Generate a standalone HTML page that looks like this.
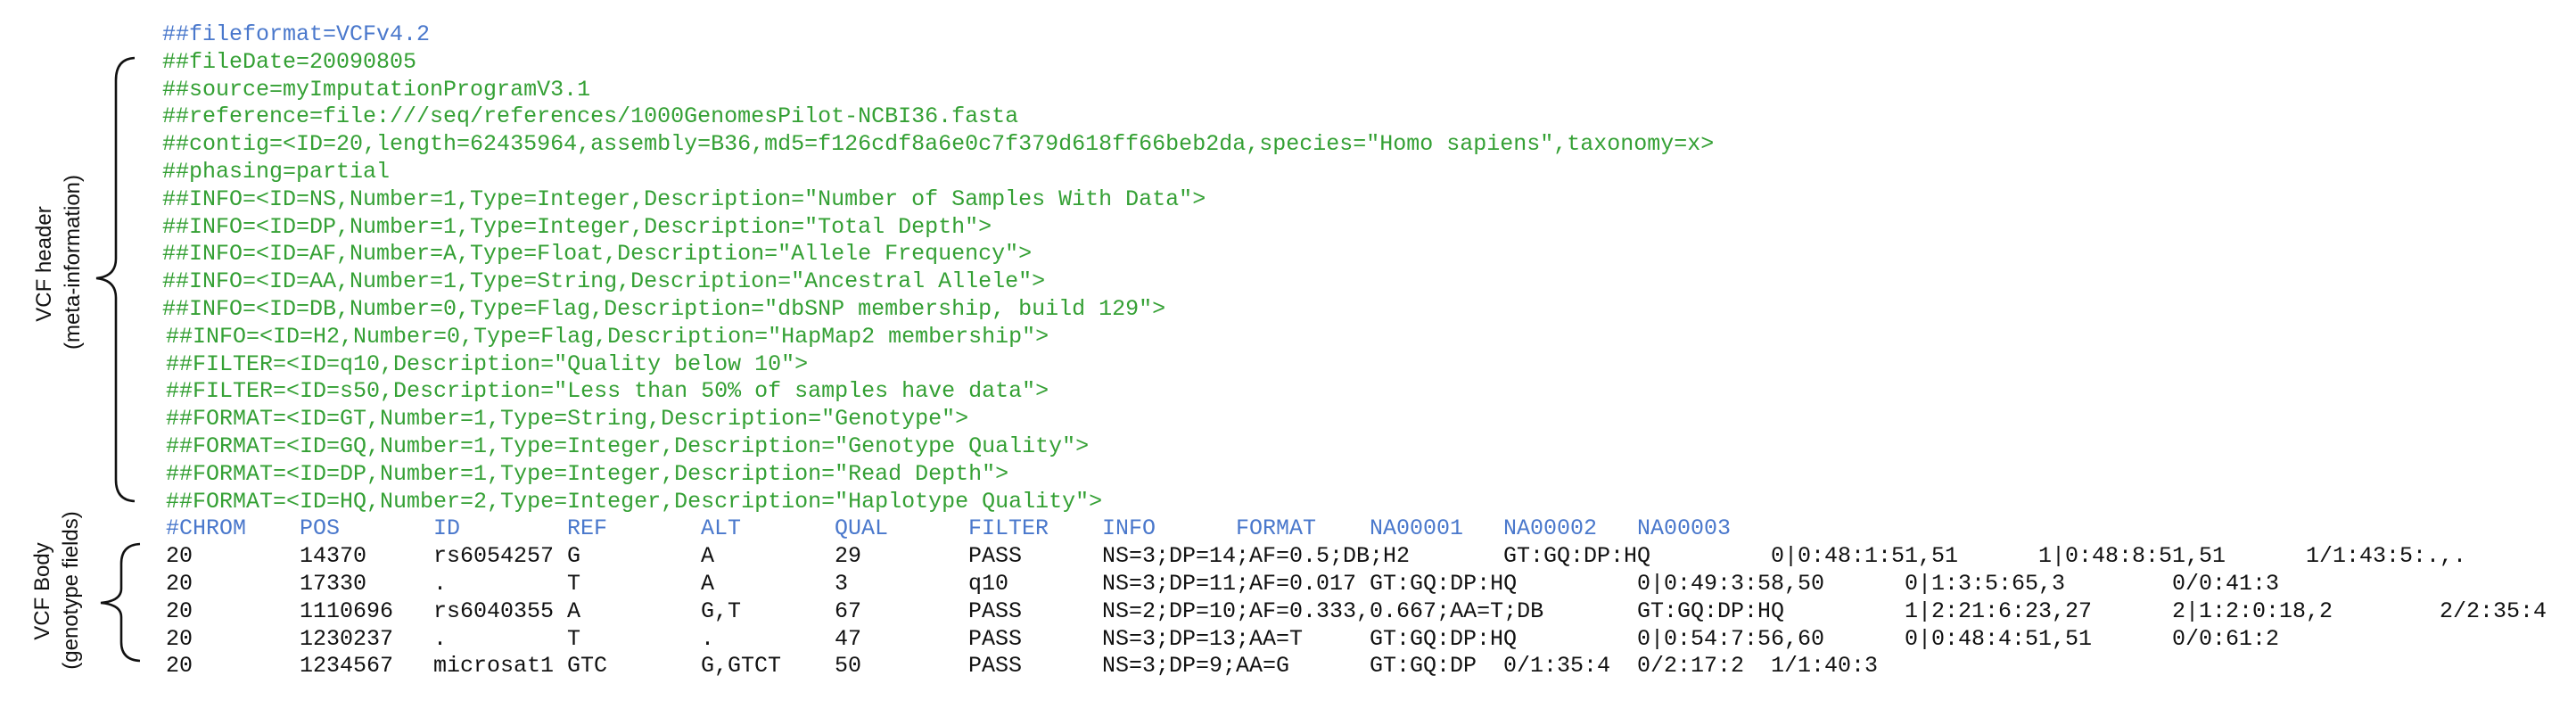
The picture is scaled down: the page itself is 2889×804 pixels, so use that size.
<!DOCTYPE html>
<html><head><meta charset="utf-8"><style>
html,body{margin:0;padding:0;background:#fff;}
body{width:2889px;height:804px;position:relative;overflow:hidden;}
.l{position:absolute;font-family:"Liberation Mono",monospace;font-size:25px;line-height:31px;white-space:pre;height:31px;}
.g{color:#34a034;}
.b{color:#4a78cc;}
.k{color:#111;}
.t{position:absolute;font-family:"Liberation Sans",sans-serif;font-size:24px;line-height:30px;color:#111;white-space:nowrap;text-align:center;transform:translate(-50%,-50%) rotate(-90deg);}
</style></head><body>
<div class="l b" style="left:182px;top:23px">##fileformat=VCFv4.2</div>
<div class="l g" style="left:182px;top:54px">##fileDate=20090805</div>
<div class="l g" style="left:182px;top:85px">##source=myImputationProgramV3.1</div>
<div class="l g" style="left:182px;top:115px">##reference=file:///seq/references/1000GenomesPilot-NCBI36.fasta</div>
<div class="l g" style="left:182px;top:146px">##contig=&lt;ID=20,length=62435964,assembly=B36,md5=f126cdf8a6e0c7f379d618ff66beb2da,species="Homo sapiens",taxonomy=x&gt;</div>
<div class="l g" style="left:182px;top:177px">##phasing=partial</div>
<div class="l g" style="left:182px;top:208px">##INFO=&lt;ID=NS,Number=1,Type=Integer,Description="Number of Samples With Data"&gt;</div>
<div class="l g" style="left:182px;top:239px">##INFO=&lt;ID=DP,Number=1,Type=Integer,Description="Total Depth"&gt;</div>
<div class="l g" style="left:182px;top:269px">##INFO=&lt;ID=AF,Number=A,Type=Float,Description="Allele Frequency"&gt;</div>
<div class="l g" style="left:182px;top:300px">##INFO=&lt;ID=AA,Number=1,Type=String,Description="Ancestral Allele"&gt;</div>
<div class="l g" style="left:182px;top:331px">##INFO=&lt;ID=DB,Number=0,Type=Flag,Description="dbSNP membership, build 129"&gt;</div>
<div class="l g" style="left:186px;top:362px">##INFO=&lt;ID=H2,Number=0,Type=Flag,Description="HapMap2 membership"&gt;</div>
<div class="l g" style="left:186px;top:393px">##FILTER=&lt;ID=q10,Description="Quality below 10"&gt;</div>
<div class="l g" style="left:186px;top:423px">##FILTER=&lt;ID=s50,Description="Less than 50% of samples have data"&gt;</div>
<div class="l g" style="left:186px;top:454px">##FORMAT=&lt;ID=GT,Number=1,Type=String,Description="Genotype"&gt;</div>
<div class="l g" style="left:186px;top:485px">##FORMAT=&lt;ID=GQ,Number=1,Type=Integer,Description="Genotype Quality"&gt;</div>
<div class="l g" style="left:186px;top:516px">##FORMAT=&lt;ID=DP,Number=1,Type=Integer,Description="Read Depth"&gt;</div>
<div class="l g" style="left:186px;top:547px">##FORMAT=&lt;ID=HQ,Number=2,Type=Integer,Description="Haplotype Quality"&gt;</div>

<div class="l b" style="left:186px;top:577px">#CHROM</div>
<div class="l b" style="left:336px;top:577px">POS</div>
<div class="l b" style="left:486px;top:577px">ID</div>
<div class="l b" style="left:636px;top:577px">REF</div>
<div class="l b" style="left:786px;top:577px">ALT</div>
<div class="l b" style="left:936px;top:577px">QUAL</div>
<div class="l b" style="left:1086px;top:577px">FILTER</div>
<div class="l b" style="left:1236px;top:577px">INFO</div>
<div class="l b" style="left:1386px;top:577px">FORMAT</div>
<div class="l b" style="left:1536px;top:577px">NA00001</div>
<div class="l b" style="left:1686px;top:577px">NA00002</div>
<div class="l b" style="left:1836px;top:577px">NA00003</div>

<div class="l k" style="left:186px;top:608px">20</div>
<div class="l k" style="left:336px;top:608px">14370</div>
<div class="l k" style="left:486px;top:608px">rs6054257 G</div>
<div class="l k" style="left:786px;top:608px">A</div>
<div class="l k" style="left:936px;top:608px">29</div>
<div class="l k" style="left:1086px;top:608px">PASS</div>
<div class="l k" style="left:1236px;top:608px">NS=3;DP=14;AF=0.5;DB;H2</div>
<div class="l k" style="left:1686px;top:608px">GT:GQ:DP:HQ</div>
<div class="l k" style="left:1986px;top:608px">0|0:48:1:51,51</div>
<div class="l k" style="left:2286px;top:608px">1|0:48:8:51,51</div>
<div class="l k" style="left:2586px;top:608px">1/1:43:5:.,.</div>

<div class="l k" style="left:186px;top:639px">20</div>
<div class="l k" style="left:336px;top:639px">17330</div>
<div class="l k" style="left:486px;top:639px">.</div>
<div class="l k" style="left:636px;top:639px">T</div>
<div class="l k" style="left:786px;top:639px">A</div>
<div class="l k" style="left:936px;top:639px">3</div>
<div class="l k" style="left:1086px;top:639px">q10</div>
<div class="l k" style="left:1236px;top:639px">NS=3;DP=11;AF=0.017 GT:GQ:DP:HQ</div>
<div class="l k" style="left:1836px;top:639px">0|0:49:3:58,50</div>
<div class="l k" style="left:2136px;top:639px">0|1:3:5:65,3</div>
<div class="l k" style="left:2436px;top:639px">0/0:41:3</div>

<div class="l k" style="left:186px;top:670px">20</div>
<div class="l k" style="left:336px;top:670px">1110696</div>
<div class="l k" style="left:486px;top:670px">rs6040355 A</div>
<div class="l k" style="left:786px;top:670px">G,T</div>
<div class="l k" style="left:936px;top:670px">67</div>
<div class="l k" style="left:1086px;top:670px">PASS</div>
<div class="l k" style="left:1236px;top:670px">NS=2;DP=10;AF=0.333,0.667;AA=T;DB</div>
<div class="l k" style="left:1836px;top:670px">GT:GQ:DP:HQ</div>
<div class="l k" style="left:2136px;top:670px">1|2:21:6:23,27</div>
<div class="l k" style="left:2436px;top:670px">2|1:2:0:18,2</div>
<div class="l k" style="left:2736px;top:670px">2/2:35:4</div>

<div class="l k" style="left:186px;top:701px">20</div>
<div class="l k" style="left:336px;top:701px">1230237</div>
<div class="l k" style="left:486px;top:701px">.</div>
<div class="l k" style="left:636px;top:701px">T</div>
<div class="l k" style="left:786px;top:701px">.</div>
<div class="l k" style="left:936px;top:701px">47</div>
<div class="l k" style="left:1086px;top:701px">PASS</div>
<div class="l k" style="left:1236px;top:701px">NS=3;DP=13;AA=T</div>
<div class="l k" style="left:1536px;top:701px">GT:GQ:DP:HQ</div>
<div class="l k" style="left:1836px;top:701px">0|0:54:7:56,60</div>
<div class="l k" style="left:2136px;top:701px">0|0:48:4:51,51</div>
<div class="l k" style="left:2436px;top:701px">0/0:61:2</div>

<div class="l k" style="left:186px;top:731px">20</div>
<div class="l k" style="left:336px;top:731px">1234567</div>
<div class="l k" style="left:486px;top:731px">microsat1 GTC</div>
<div class="l k" style="left:786px;top:731px">G,GTCT</div>
<div class="l k" style="left:936px;top:731px">50</div>
<div class="l k" style="left:1086px;top:731px">PASS</div>
<div class="l k" style="left:1236px;top:731px">NS=3;DP=9;AA=G</div>
<div class="l k" style="left:1536px;top:731px">GT:GQ:DP</div>
<div class="l k" style="left:1686px;top:731px">0/1:35:4</div>
<div class="l k" style="left:1836px;top:731px">0/2:17:2</div>
<div class="l k" style="left:1986px;top:731px">1/1:40:3</div>

<svg width="2889" height="804" style="position:absolute;left:0;top:0" fill="none" stroke="#111" stroke-width="2.6">
<path d="M151 65 Q130 66 130 90 L130 290 Q130 310 108 312 Q130 314 130 334 L130 538 Q130 561 151 562"/>
<path d="M157 610 Q136 611 136 632 L136 660 Q136 674 113 676 Q136 678 136 692 L136 720 Q136 740 157 741"/>
</svg>

<div class="t" style="left:50px;top:296px">VCF header</div>
<div class="t" style="left:82px;top:294px">(meta-information)</div>
<div class="t" style="left:48px;top:663px">VCF Body</div>
<div class="t" style="left:80px;top:662px">(genotype fields)</div>
</body></html>
